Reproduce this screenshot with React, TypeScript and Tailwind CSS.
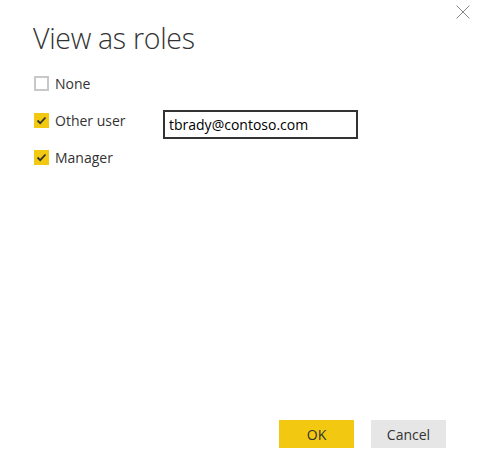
import { useState } from 'react';

type Role = { id: string; label: string; checked: boolean };

const initialRoles: Role[] = [
  { id: 'none', label: 'None', checked: false },
  { id: 'other', label: 'Other user', checked: true },
  { id: 'manager', label: 'Manager', checked: true },
];

function CheckBox({ checked }: { checked: boolean }) {
  if (!checked) {
    return <span className="block w-[15px] h-[15px] border-2 border-[#c8c8c8] bg-white" />;
  }
  return (
    <span className="flex w-[15px] h-[15px] items-center justify-center bg-[#f2c811]">
      <svg width="11" height="9" viewBox="0 0 11 9" fill="none">
        <path d="M1.5 4.5 L4.2 7.2 L9.5 1.5" stroke="#333" strokeWidth="1.8" />
      </svg>
    </span>
  );
}

export default function App() {
  const [roles, setRoles] = useState(initialRoles);
  const [email, setEmail] = useState('tbrady@contoso.com');

  const toggle = (id: string) =>
    setRoles((rs) => rs.map((r) => (r.id === id ? { ...r, checked: !r.checked } : r)));

  return (
    <div
      className="relative w-[478px] h-[457px] bg-white text-[#333] flex flex-col"
      style={{ fontFamily: '"Open Sans", "Noto Sans", sans-serif' }}
    >
      <button className="absolute right-[8px] top-[5px] w-[14px] h-[14px]" aria-label="Close">
        <svg width="14" height="14" viewBox="0 0 14 14">
          <path d="M0.5 0.5 L13.5 13.5 M13.5 0.5 L0.5 13.5" stroke="#888" strokeWidth="1" />
        </svg>
      </button>

      <h1 className="pl-[33px] pt-[18px] text-[28.5px] font-light leading-[40px] tracking-[-0.3px]">
        View as roles
      </h1>

      <div className="pl-[34px] pt-[18px] flex flex-col gap-[22px]">
        {roles.map((r) => (
          <div key={r.id} className="flex items-start h-[15px]">
            <label className="flex items-center gap-[6px] w-[129px] cursor-pointer" onClick={() => toggle(r.id)}>
              <CheckBox checked={r.checked} />
              <span className="text-[14px] leading-[15px]">{r.label}</span>
            </label>
            {r.id === 'other' && (
              <input
                value={email}
                onChange={(e) => setEmail(e.target.value)}
                className="-mt-[3px] w-[195px] h-[29px] border-2 border-[#333] px-[4px] text-[14px] text-black outline-none"
              />
            )}
          </div>
        ))}
      </div>

      <div className="mt-auto mb-[9px] flex justify-end gap-[17px] pr-[32px]">
        <button className="w-[75px] h-[28px] bg-[#f2c811] text-[14px] text-[#333]">OK</button>
        <button className="w-[75px] h-[28px] bg-[#e6e6e6] text-[14px] text-[#333]">Cancel</button>
      </div>
    </div>
  );
}
